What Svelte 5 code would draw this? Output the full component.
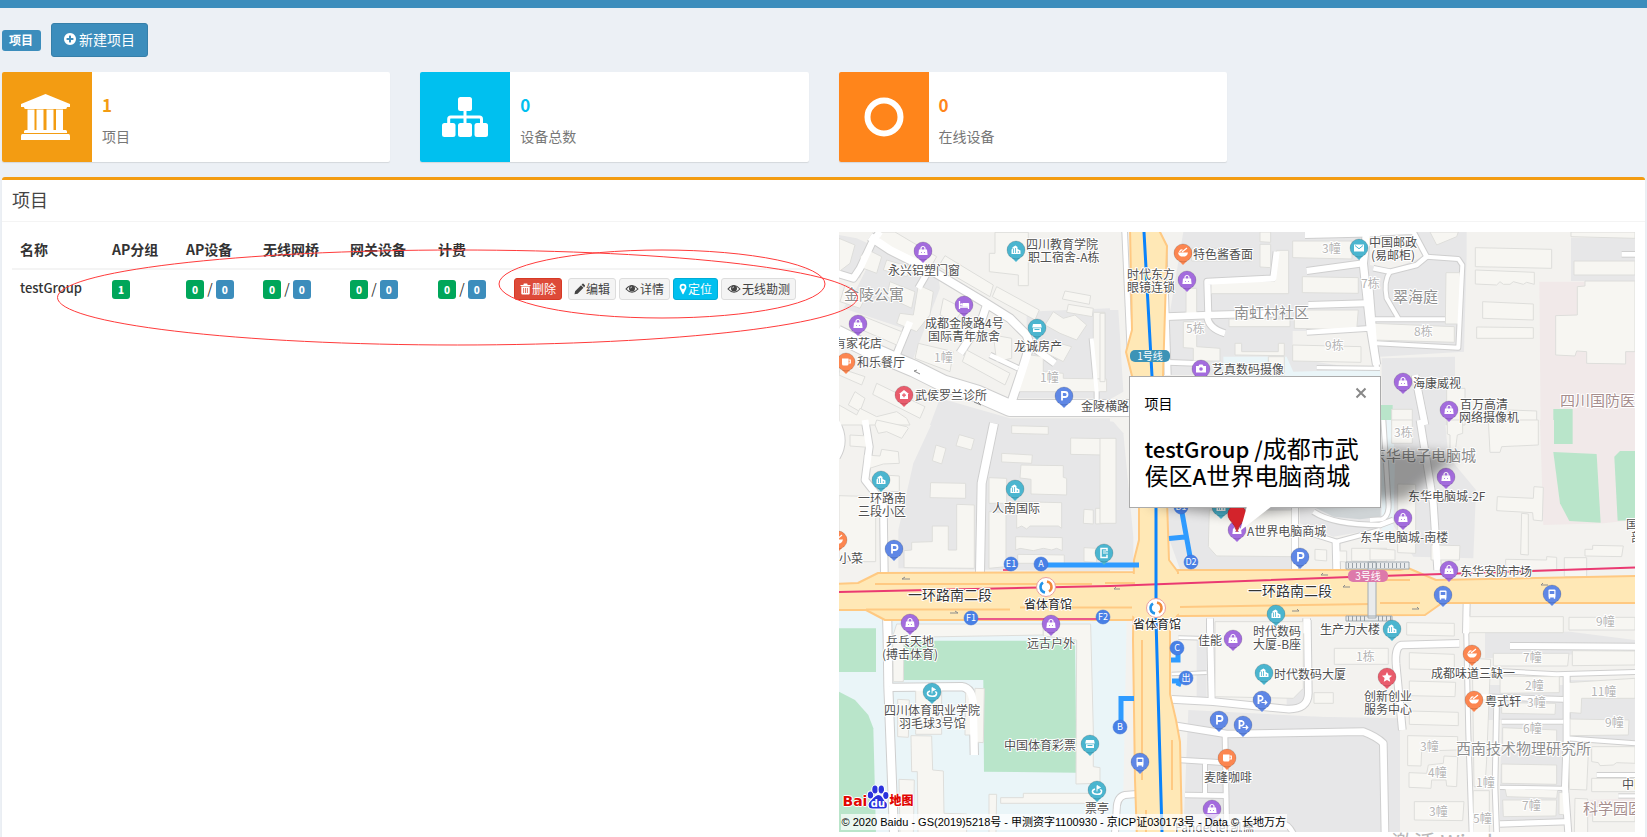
<script>
  const cards = [
    { icon: 'bank', value: 1, label: '项目', tone: 'amber' },
    { icon: 'sitemap', value: 0, label: '设备总数', tone: 'aqua' },
    { icon: 'ring', value: 0, label: '在线设备', tone: 'orange' },
  ];

  const columns = ['名称', 'AP分组', 'AP设备', '无线网桥', '网关设备', '计费', ''];
  const groups = [{ name: 'testGroup', ap: 1, counts: [[0, 0], [0, 0], [0, 0], [0, 0]] }];
  const actions = [
    { icon: 'trash', label: '删除', tone: 'danger' },
    { icon: 'pencil', label: '编辑', tone: 'plain' },
    { icon: 'eye', label: '详情', tone: 'plain' },
    { icon: 'marker', label: '定位', tone: 'info' },
    { icon: 'eye', label: '无线勘测', tone: 'plain' },
  ];

  const GREY = '#e7e7e8';
  const GREEN = '#b9e5ca';
  const PINK = '#f1e9e9';
  const WATER = '#eaf5f8';
  const LAND = '#f3f2ef';

  // Each map tile keeps its shapes in a grid of thirds of a pixel from its own origin.
  const tiles = [
    {
      x: 830, y: 225,
      areas: [
        [GREY, '27,30 80,40 125,60 90,160 27,150'],
        [GREY, '130,60 320,120 330,190 250,400 185,390 220,310 40,250 80,190 110,130'],
        [GREY, '590,260 840,250 840,520 565,520 590,400'],
        [GREY, '330,520 540,580 840,580 840,600 300,600'],
      ],
      roads: [
        [48, 'M20,325 L110,370 190,405 250,430 340,475 440,505 540,549 900,549'],
        [24, 'M120,35 L180,75 310,140 460,230 540,280 590,330 600,360 575,440 545,530'],
        [20, 'M150,20 L125,55 90,130 70,160 20,145'],
        [18, 'M300,130 L265,190'],
        [22, 'M470,240 L455,285 390,385'],
        [14, 'M480,390 L565,430'],
        [20, 'M600,360 L675,415'],
        [20, 'M240,290 L195,400'],
        [12, 'M800,540 L800,500 785,340'],
      ],
      buildings: [
        '27,40 75,60 60,115 27,140', '195,21 320,95 300,130 150,50 145,21', '90,95 115,75 155,95 140,145 100,130',
        '345,92 490,180 480,215 325,125', '170,105 240,125 230,155 160,135',
        '495,22 595,22 595,182 565,182 565,150 478,140 478,85 495,85', '500,185 628,255 615,285 487,215',
        '705,198 782,212 778,238 697,222', '715,238 790,250 787,275 710,262',
        '670,260 700,280 735,270 770,300 740,345 690,325 645,300', '790,262 825,262 825,480 790,480',
        '670,350 725,365 700,410 650,385', '265,355 370,380 360,440 255,400', '410,375 540,445 525,480 397,410',
        '180,170 255,200 245,250 170,215', '265,180 310,200 300,270 260,320 200,295 210,265 250,270',
        '340,220 400,250 375,290 330,270', '90,270 215,320 200,360 85,310', '45,180 110,210 90,250 30,230',
        '600,390 640,395 640,440 700,445 700,460 830,462 830,500 565,500 575,450',
        '140,475 285,545 270,580 128,508', '75,500 105,520 90,560 55,540',
        '27,540 80,570 90,550 140,575 200,560 230,580 240,600 27,600', '30,430 105,455 95,480 27,450',
        '490,330 545,340 545,400 500,410',
      ],
    },
    {
      x: 1100, y: 225,
      areas: [
        [GREY, '250,21 840,21 840,450 210,450 210,260'],
        [GREY, '0,255 55,255 70,500 0,540'],
        [LAND, '578,318 840,318 840,440 578,400'],
        [WATER, '370,395 560,395 580,440 840,432 840,460 370,460'],
      ],
      roads: [
        [14, 'M74,20 L90,380'],
        [18, 'M190,60 L203,450'],
        [20, 'M200,275 L330,270 520,265'],
        [18, 'M325,270 L322,170 520,160 530,80'],
        [18, 'M322,275 Q325,310 375,325'],
        [18, 'M615,30 L840,25'],
        [18, 'M620,138 L790,115'],
        [18, 'M625,240 L800,235'],
        [22, 'M800,20 L790,115 810,300 830,420'],
        [14, 'M620,322 L810,310'],
        [10, 'M650,428 L840,430'],
        [14, 'M205,412 L290,415'],
      ],
      buildings: [
        '275,70 455,70 455,108 275,108', '480,21 512,21 512,52 480,50', '480,58 512,58 512,128 480,126',
        '530,76 566,76 566,206 333,206 333,172 525,168', '578,48 756,48 756,102 578,98',
        '607,155 775,158 775,205 607,203', '258,190 290,190 290,275 258,275', '387,282 570,282 570,305 387,305',
        '583,255 775,255 770,315 583,310', '578,360 783,365 783,412 578,408',
        '405,355 425,355 425,380 535,380 535,355 553,355 553,392 405,390',
        '250,290 290,290 290,365 360,370 360,408 280,408 280,370 250,368', '505,395 553,395 553,450 505,450',
        '0,265 15,265 15,470 0,470',
      ],
    },
    {
      x: 1370, y: 225,
      areas: [
        [GREY, '0,21 290,21 290,90 282,380 30,395 0,340'],
        [LAND, '0,21 120,21 160,95 60,135 0,120'],
        [PINK, '508,170 795,170 795,600 512,600'],
        [GREY, '603,38 795,38 795,168 603,168'],
        [GREY, '35,400 255,395 255,600 160,600 35,600'],
        [GREEN, '550,552 608,552 608,600 550,600'],
        [GREEN, '30,540 68,540 68,600 30,600'],
      ],
      roads: [
        [14, 'M0,25 L130,20 170,95 140,120 60,140 10,130'],
        [12, 'M170,95 L265,102 277,120 265,368 20,355'],
        [12, 'M60,140 Q40,170 50,220 L85,280 M15,283 L225,283'],
        [14, 'M0,180 L20,430'],
        [20, 'M135,450 L165,600'],
        [14, 'M755,88 L800,88'],
      ],
      buildings: [
        '180,21 265,21 260,35 200,60', '316,68 545,73 545,130 316,125',
        '316,135 493,142 493,178 470,172 460,178 430,170 420,178 400,178 390,170 380,180 316,177',
        '338,230 490,237 490,285 338,280', '320,306 490,308 490,340 320,340', '228,143 270,143 276,200 270,297 226,297',
        '8,295 253,305 253,352 8,345', '612,108 795,108 795,150 612,150',
        '645,168 795,168 795,380 767,380 767,417 650,415 650,380 620,378 615,393 557,390 557,272 622,270 622,185 645,183',
        '230,490 285,490 285,600 230,600', '65,553 127,553 127,600 65,600', '415,555 500,558 500,600 370,600 415,580',
        '603,21 795,21 795,40 603,35',
      ],
    },
    {
      x: 830, y: 420,
      areas: [[GREY, '310,0 840,0 840,455 205,445 205,330 250,130']],
      roads: [
        [20, 'M15,0 Q50,60 20,110'],
        [20, 'M105,0 L118,80 105,180 160,250 163,460'],
        [24, 'M492,10 L455,190 450,460'],
        [20, 'M170,595 L172,640'],
      ],
      buildings: [
        '60,45 113,48 113,82 60,78', '103,105 150,108 155,88 205,95 208,130 160,132 103,150',
        '160,165 208,168 208,215 150,213', '318,75 348,85 335,132 307,122', '388,44 433,57 424,90 378,77',
        '545,17 655,20 655,43 545,40', '515,100 607,105 605,130 515,126', '302,188 407,190 407,235 300,233',
        '573,135 700,137 700,172 710,175 710,225 603,222 603,178 570,174', '477,173 530,175 530,250 477,250',
        '380,253 433,255 433,445 222,443 222,392 245,390 245,367 307,365 307,318 355,318 355,390 380,390',
        '477,275 528,277 528,440 477,445', '560,245 695,248 695,325 685,318 600,318 590,327 575,318 560,325',
        '557,350 697,353 697,392 680,385 665,390 640,385 610,392 570,385 557,390', '563,403 703,405 703,430 563,430',
        '722,54 840,56 840,310 797,312 797,265 813,265 813,105 722,103', '762,268 790,270 790,312 760,310',
        '762,383 800,385 800,427 762,425', '27,227 137,230 137,425 27,425',
        '140,0 230,20 235,25 215,55 170,35 145,40 135,15',
      ],
    },
    {
      x: 1100, y: 370,
      areas: [
        [GREY, '0,150 40,155 70,190 100,500 100,600 0,600'],
        [GREY, '205,410 575,410 575,598 240,598 205,500'],
        [GREY, '600,410 870,410 870,470 700,500 600,460'],
        ['#cfd4d6', '640,410 842,410 842,440 780,448 700,440'],
      ],
      roads: [
        [18, 'M585,410 L585,600'],
        [12, 'M600,480 L710,515 840,480'],
        [20, 'M708,515 L710,600'],
        [18, 'M330,745 L330,790'],
        [20, 'M620,745 L620,790'],
        [14, 'M640,425 Q700,465 840,465 L880,450'],
      ],
      buildings: [
        '0,205 48,205 48,460 0,460', '328,420 575,420 575,560 350,558 325,530', '645,538 680,540 680,573 645,570',
        '708,543 740,543 740,576 708,574', '755,535 860,535 860,575 755,573',
      ],
    },
    {
      x: 1370, y: 420,
      areas: [
        [PINK, '510,0 795,0 795,300 700,310 520,315'],
        [GREEN, '552,0 608,0 608,72 552,72'],
        [GREEN, '550,96 680,102 692,308 598,303 570,250'],
        [GREEN, '750,93 795,93 795,300 743,302 733,110'],
        [GREY, '35,0 225,0 235,110 318,210 310,415 130,410 60,300'],
        [WATER, '35,0 65,0 75,110 70,330 35,330'],
      ],
      roads: [
        [20, 'M150,0 L190,250 203,450'],
        [12, 'M0,300 L35,298 Q60,290 55,240 L40,0'],
        [18, 'M290,550 L288,640'],
      ],
      buildings: [
        '355,0 505,0 505,75 395,80 390,97 360,97', '232,0 278,0 278,40 262,45 255,100 240,90 240,45 232,42',
        '382,230 490,235 492,200 520,202 517,303 490,300 488,278 380,272', '455,280 475,282 475,405 452,403',
        '83,192 137,193 137,400 83,398', '183,375 270,377 268,420 183,420', '0,385 75,390 75,420 0,420',
        '407,418 530,420 530,410 560,412 560,450 407,450', '583,413 650,413 650,470 583,470',
        '668,376 760,378 755,410 645,408 645,388 668,388', '65,0 127,0 127,70 65,70',
      ],
    },
    {
      x: 830, y: 620,
      areas: [
        [WATER, '27,-40 910,-40 925,640 27,640'],
        [GREEN, '27,25 138,25 138,156 27,156'],
        [GREEN, '27,215 75,240 115,285 130,325 138,640 27,640'],
        [GREEN, '222,62 735,62 740,458 462,455 460,180 222,180'],
      ],
      roads: [
        [24, 'M172,0 L175,200 192,640'],
        [22, 'M180,202 L395,200 Q430,205 430,260 L433,405'],
      ],
      buildings: [
        '200,12 640,12 640,45 222,52 220,185 190,185 188,50',
        '640,12 782,12 790,330 790,440 810,443 810,490 738,492 740,60 640,48', '257,200 335,200 335,343 257,343',
        '203,238 238,240 235,352 203,350', '435,205 463,206 460,368 430,366', '407,218 425,220 425,345 405,345',
        '243,347 305,348 308,450 340,453 342,580 410,582 410,640 264,640 262,455 245,455',
        '207,478 253,480 250,640 210,640', '477,523 500,523 498,640 477,640', '512,533 580,533 580,520 800,520 800,550 512,550',
      ],
    },
    {
      x: 1100, y: 620,
      areas: [
        [LAND, '80,0 120,0 120,520 70,520'],
        [GREY, '265,270 840,300 840,640 250,640'],
        [GREY, '290,50 320,50 320,240 290,240'],
        [GREY, '560,230 620,180 620,260 560,260'],
        [GREY, '640,290 900,295 900,640 640,640'],
      ],
      roads: [
        [20, 'M215,238 L340,245 560,267 Q625,270 625,220 L622,0'],
        [18, 'M330,0 L335,240'],
        [8, 'M215,162 L320,158 M235,53 L320,55'],
        [20, 'M230,318 L380,342 790,335 Q830,350 850,370 L855,640'],
        [14, 'M375,342 L380,620'],
        [14, 'M240,420 L370,428'],
        [12, 'M315,430 L315,520'],
        [14, 'M255,525 L375,527'],
        [18, 'M110,522 L75,525 Q50,530 50,570 L45,640'],
        [14, 'M375,607 L540,607 Q565,610 580,640'],
      ],
      buildings: [
        '345,5 610,5 610,205 580,235 345,230', '642,218 700,218 700,250 642,250', '703,85 865,85 865,133 703,133',
      ],
    },
    {
      x: 1370, y: 620,
      areas: [
        [GREY, '345,35 600,35 795,60 795,95 345,115'],
        [GREY, '330,195 580,195 580,300 345,300'],
        [GREY, '395,315 580,315 580,500 390,500'],
        [GREY, '600,180 795,180 795,360 600,355'],
        [GREY, '390,505 580,505 580,600 390,600'],
        [PINK, '650,540 795,535 795,580 650,590'],
      ],
      roads: [
        [12, 'M288,0 L295,340 305,640'],
        [20, 'M268,70 L95,75 Q75,80 78,130 L97,330'],
        [18, 'M420,78 L800,80'],
        [12, 'M330,150 L560,163 800,156'],
        [18, 'M590,165 L590,360 585,500 595,640'],
        [14, 'M335,230 L580,238'],
        [14, 'M380,240 L375,500 380,640'],
        [12, 'M395,305 L580,305'],
        [12, 'M590,355 L800,370'],
        [10, 'M390,502 L580,505'],
        [16, 'M390,612 L600,605'],
        [12, 'M680,465 L800,465'],
        [10, 'M745,528 L800,528'],
      ],
      buildings: [
        '118,98 253,103 253,150 118,147', '118,183 257,187 255,230 118,227', '118,273 265,277 265,317 118,313',
        '113,347 263,350 263,390 155,393 153,438 113,437',
        '117,458 170,460 175,435 220,430 222,408 263,410 260,500 230,498 228,480 185,480 183,505 117,502',
        '133,545 282,545 278,602 133,600', '370,100 597,100 593,138 370,138', '607,92 795,93 795,135 607,137',
        '390,168 568,170 568,218 390,220', '590,188 795,175 795,235 635,235 633,280 590,277',
        '395,248 557,250 555,283 395,280', '600,297 777,300 775,345 600,347', '398,323 560,330 560,395 398,395',
        '395,432 560,435 560,493 395,490', '405,505 563,510 560,535 410,530', '398,540 560,540 558,588 400,590',
        '598,395 655,398 650,510 598,508', '665,380 795,380 795,430 740,428 730,435 690,437 685,428 665,425',
        '665,475 795,475 795,515 665,515', '310,512 358,512 358,640 310,640',
        '307,115 362,118 350,420 345,500 312,500', '615,535 653,537 653,640 613,640', '567,517 595,520 593,585 567,583',
        '110,8 253,10 253,48 110,45', '293,-10 580,-10 580,38 293,38', '597,-8 795,-8 795,30 597,30',
        '668,560 795,560 795,605 668,605',
      ],
    },
  ];

  const pinColors = {
    bag: '#a36cdd', bed: '#a36cdd', camera: '#a36cdd',
    tower: '#4bb5cf', store: '#4bb5cf', mail: '#4bb5cf', exit: '#4bb5cf', golf: '#4bb5cf',
    bowl: '#fc8650', cup: '#fc8650', clinic: '#e95c6c', star: '#e95c6c',
    park: '#5f87e5', parkTo: '#5f87e5', bus: '#5f87e5',
  };

  const pins = [
    ['bag', 923, 251], ['bag', 858, 324], ['bag', 1187, 280], ['bag', 1403, 382], ['bag', 1449, 410],
    ['bag', 1446, 477], ['bag', 1403, 518], ['bag', 1449, 570], ['bag', 910, 623], ['bag', 1051, 624],
    ['bag', 1233, 639], ['bag', 1212, 809], ['bag', 1237, 530], ['bed', 964, 305], ['camera', 1201, 369],
    ['tower', 1016, 250], ['tower', 881, 480], ['tower', 1015, 489], ['tower', 1276, 614], ['tower', 1264, 673],
    ['tower', 1392, 629], ['tower', 1221, 507], ['store', 1037, 328], ['store', 1090, 744], ['mail', 1359, 248],
    ['exit', 1104, 553], ['golf', 932, 692], ['golf', 1097, 790], ['bowl', 1183, 253], ['bowl', 1472, 654],
    ['bowl', 1474, 700], ['bowl', 838, 540], ['cup', 846, 362], ['cup', 1227, 758], ['clinic', 904, 395],
    ['star', 1387, 677], ['park', 1064, 396], ['park', 894, 549], ['park', 1300, 557], ['park', 1219, 720],
    ['parkTo', 1262, 700], ['parkTo', 1243, 725], ['bus', 1443, 595], ['bus', 1552, 594], ['bus', 1140, 762],
  ];

  const exits = [
    ['E1', 1011, 564], ['A', 1041, 564], ['F1', 971, 618], ['F2', 1103, 617], ['D2', 1191, 562],
    ['D1', 1181, 507], ['C', 1177, 648], ['出', 1186, 678], ['B', 1120, 727],
  ];

  const stations = [[1046, 587], [1156, 608]];

  const labels = [
    ['四川教育学院', 1026, 245], ['职工宿舍-A栋', 1028, 258], ['永兴铝塑门窗', 888, 271], ['成都金陵路4号', 925, 324],
    ['国际青年旅舍', 928, 337], ['龙诚房产', 1014, 347], ['有家花店', 834, 344], ['和乐餐厅', 857, 363],
    ['武侯罗兰诊所', 915, 396], ['金陵横路', 1081, 407], ['特色酱香面', 1193, 255], ['时代东方', 1127, 275],
    ['眼镜连锁', 1127, 288], ['艺真数码摄像', 1212, 370], ['中国邮政', 1369, 243], ['(易邮柜)', 1371, 256],
    ['海康威视', 1413, 384], ['百万高清', 1460, 405], ['网络摄像机', 1459, 418], ['一环路南', 858, 499],
    ['三段小区', 858, 512], ['人南国际', 992, 509], ['小菜', 839, 559], ['A世界电脑商城', 1247, 532],
    ['东华电脑城-2F', 1408, 497], ['东华电脑城-南楼', 1360, 538], ['东华安防市场', 1460, 572], ['国', 1626, 525],
    ['部', 1631, 538], ['乒乓天地', 886, 642], ['(搏击体育)', 882, 655], ['远古户外', 1027, 644],
    ['四川体育职业学院', 884, 711], ['羽毛球3号馆', 899, 724], ['中国体育彩票', 1004, 746], ['票亭', 1085, 809],
    ['佳能', 1198, 641], ['时代数码', 1253, 632], ['大厦-B座', 1253, 645], ['时代数码大厦', 1274, 675],
    ['生产力大楼', 1320, 630], ['创新创业', 1364, 697], ['服务中心', 1364, 710], ['麦隆咖啡', 1204, 778],
    ['Fandecler凯儒', 1175, 828], ['成都味道三缺一', 1431, 674], ['粤式轩', 1485, 702], ['中国', 1622, 785],
    ['省体育馆', 1024, 605, 'dark'], ['省体育馆', 1133, 625, 'dark'],
    ['一环路南二段', 908, 596, 'road'], ['一环路南二段', 1248, 592, 'road'],
    ['金陵公寓', 844, 294, 'area'], ['南虹村社区', 1234, 312, 'area'], ['翠海庭', 1393, 296, 'area'],
    ['东华电子电脑城', 1371, 455, 'area'], ['西南技术物理研究所', 1456, 748, 'area'],
    ['四川国防医院', 1560, 400, 'school'], ['科学园医院', 1583, 808, 'school'],
    ['1幢', 934, 358, 'unit'], ['1幢', 1040, 378, 'unit'], ['3幢', 1322, 249, 'unit'], ['7栋', 1361, 284, 'unit'],
    ['5栋', 1186, 329, 'unit'], ['9栋', 1325, 346, 'unit'], ['8栋', 1414, 332, 'unit'], ['3栋', 1394, 433, 'unit'],
    ['9幢', 1596, 622, 'unit'], ['1栋', 1356, 657, 'unit'], ['7幢', 1523, 658, 'unit'], ['2幢', 1525, 686, 'unit'],
    ['3幢', 1527, 703, 'unit'], ['11幢', 1591, 692, 'unit'], ['6幢', 1523, 729, 'unit'], ['9幢', 1605, 723, 'unit'],
    ['3幢', 1420, 747, 'unit'], ['4幢', 1428, 773, 'unit'], ['3幢', 1429, 812, 'unit'], ['1幢', 1476, 783, 'unit'],
    ['7幢', 1522, 806, 'unit'], ['5幢', 1473, 819, 'unit'],
  ];

  let popupOpen = $state(true);
</script>

{#snippet glyph(kind)}
  {#if kind === 'bag'}
    <path d="M-4-1.5h8l.6 5.5h-9.2z" fill="#fff" />
    <path d="M-2-1v-1.500a2 2 0 0 1 4 0V-1" fill="none" stroke="#fff" stroke-width="1.2" />
    <path d="M-1.500 1v.8M1.500 1v.8" stroke="#a36cdd" />
  {:else if kind === 'bed'}
    <path d="M-4.500-4v8M-4.500 2h9v2M4.500 2V-1H-1v2" fill="none" stroke="#fff" stroke-width="1.300" />
    <path d="M-1-2h5.500v3.500H-1z" fill="#fff" /><circle cx="-2.600" cy="-.6" r="1.200" fill="#fff" />
  {:else if kind === 'camera'}
    <path d="M-5-3h2.500l1-1.500h3L2.500-3H5v6.500H-5z" fill="#fff" /><circle r="1.800" fill="#a36cdd" />
  {:else if kind === 'tower'}
    <path d="M-4.500-.5l1-.8v-1.500L-.5-4.500 1.500-3v2L4.500.5V4h-9z" fill="#fff" />
    <path d="M-2.500-1.500v4.500M-.5-2v5M2.300 1v2" stroke="#4bb5cf" stroke-width=".8" />
  {:else if kind === 'store'}
    <path d="M-4-4h8l.8 3.500h-9.600zM-4 .3h8V4h-8z" fill="#fff" /><path d="M-2.500 1.500h5" stroke="#4bb5cf" />
  {:else if kind === 'mail'}
    <path d="M-5-3.500H5v7H-5z" fill="#fff" /><path d="M-4-2.500L0 .8l4-3.300" fill="none" stroke="#4bb5cf" />
  {:else if kind === 'exit'}
    <path d="M3-1.800V-4.500h-6v9h6V1.800" fill="none" stroke="#fff" stroke-width="1.500" />
    <path d="M-1 0h5M-1-2h3" stroke="#fff" stroke-width="1.200" />
  {:else if kind === 'golf'}
    <path d="M0 1.500v-6L3.500-2.500 0-1" fill="#fff" stroke="#fff" stroke-width=".9" />
    <path d="M-2-1q-3 1-2.500 3T0 4.300 4.500 2 3 0" fill="none" stroke="#fff" stroke-width="1.500" />
  {:else if kind === 'bowl'}
    <path d="M-5-.5H5Q4.500 2.500 2 3.500H-2Q-4.500 2.500-5-.5z" fill="#fff" />
    <path d="M-1-1l5-4M-3.500-1q1-2.500 3-2" fill="none" stroke="#fff" stroke-width="1.200" />
  {:else if kind === 'cup'}
    <path d="M-4-3.500H2.500V2Q2.500 3.500 1 3.500h-3.500Q-4 3.500-4 2z" fill="#fff" />
    <path d="M2.500-2H4.300V1H2.500" fill="none" stroke="#fff" stroke-width="1.200" />
  {:else if kind === 'clinic'}
    <path d="M0-5L5-1H4v5h-8V-1h-1z" fill="#fff" /><path d="M0-1.800v4M-2 .2h4" stroke="#e95c6c" stroke-width="1.300" />
  {:else if kind === 'star'}
    <path d="M0-5l1.500 3.300 3.600.4-2.700 2.400.8 3.600L0 2.900l-3.200 1.800.8-3.600-2.700-2.400 3.600-.4z" fill="#fff" />
  {:else if kind === 'bus'}
    <rect x="-3.500" y="-4.500" width="7" height="8" rx="1" fill="#fff" /><path d="M-2.300-3h4.600v3h-4.600z" fill="#5f87e5" />
    <path d="M-2.500 3v1.800M2.500 3v1.800" stroke="#fff" stroke-width="1.400" />
  {:else}
    <path d={kind === 'park' ? 'M-2 4.500v-8.500H1a2.500 2.500 0 0 1 0 5h-3' : 'M-3.500 4v-8H-1a2.400 2.400 0 0 1 0 4.600h-2.500'} fill="none" stroke="#fff" stroke-width="1.800" />
    {#if kind === 'parkTo'}<path d="M-.5 2.500h5M2.800.5l2 2-2 2" fill="none" stroke="#fff" stroke-width="1.200" />{/if}
  {/if}
{/snippet}

{#snippet actionIcon(kind)}
  {#if kind === 'trash'}
    <svg class="ico" width="11" height="12" viewBox="0 0 11 12" aria-hidden="true">
      <path d="M3.500 2V1q0-.6.600-.6h2.800q.6 0 .6.600v1H10.500v1H.5V2zM1.300 3.500h8.400v7q0 1.100-1 1.100H2.300q-1 0-1-1.100z" fill="currentColor" />
      <path d="M3.600 5v5M5.500 5v5M7.400 5v5" stroke="#dd4b39" stroke-width=".8" />
    </svg>
  {:else if kind === 'pencil'}
    <svg class="ico" width="11" height="12" viewBox="0 0 11 12" aria-hidden="true">
      <path d="M.5 11.300l.6-3.100L7 2.300l2.500 2.500-5.900 5.900zM7.600 1.700l.9-.9q.5-.4 1 0l1.400 1.500q.4.500 0 1l-.8.900z" fill="currentColor" />
    </svg>
  {:else if kind === 'eye'}
    <svg class="ico" width="14" height="12" viewBox="0 0 14 12" aria-hidden="true">
      <path d="M1 6Q7-1 13 6 7 12.500 1 6z" fill="none" stroke="currentColor" stroke-width="1.100" />
      <circle cx="7" cy="5.500" r="3" fill="currentColor" /><path d="M5.600 5.300A1.400 1.400 0 0 1 7 3.900" stroke="#f4f4f4" stroke-width=".7" fill="none" />
    </svg>
  {:else}
    <svg class="ico" width="8" height="12" viewBox="0 0 8 12" aria-hidden="true">
      <path fill-rule="evenodd" d="M4 .8a3.400 3.400 0 0 1 3.400 3.400c0 1-.3 1.500-.7 2.300L4.500 11q-.5.700-1 0L1.300 6.500C.9 5.700.6 5.200.6 4.200A3.400 3.400 0 0 1 4 .8zm0 1.800a1.700 1.700 0 1 0 0 3.400 1.700 1.700 0 0 0 0-3.400z" fill="currentColor" />
    </svg>
  {/if}
{/snippet}

<div class="page">
  <div class="topbar"></div>
  <main>
    <header class="tools">
      <span class="tag">项目</span>
      <button class="create" type="button">
        <svg width="12" height="12" viewBox="0 0 1536 1536" aria-hidden="true">
          <path fill="currentColor" d="M1216 832v-128q0-26-19-45t-45-19h-256v-256q0-26-19-45t-45-19h-128q-26 0-45 19t-19 45v256h-256q-26 0-45 19t-19 45v128q0 26 19 45t45 19h256v256q0 26 19 45t45 19h128q26 0 45-19t19-45v-256h256q26 0 45-19t19-45zm320-64q0 209-103 385.500t-279.500 279.500-385.500 103-385.500-103-279.500-279.500-103-385.500 103-385.500 279.500-279.500 385.500-103 385.500 103 279.500 279.500 103 385.500z" />
        </svg>
        新建项目
      </button>
    </header>

    <section class="cards">
      {#each cards as card}
        <article class="card {card.tone}">
          <div class="card-icon">
            {#if card.icon === 'bank'}
              <svg width="49" height="46" viewBox="0 0 49 46" fill="#fff" aria-hidden="true">
                <path d="M24.500 0L49 10v3h-3q0 2-1.500 2H4.500Q3 15 3 13H0v-3zM6.500 15.500h7V36h-7zM15.500 15.500h7V36h-7zM25.500 15.500h7V36h-7zM35 15.500h7V36h-7zM3 39v-1.500Q3 36 4.500 36h40q1.500 0 1.500 1.500V39zM0 46v-4q0-2 1.500-2h46q1.500 0 1.500 2v4z" />
              </svg>
            {:else if card.icon === 'sitemap'}
              <svg width="46" height="40" viewBox="0 0 46 40" fill="#fff" aria-hidden="true">
                <rect x="16" width="14" height="14" rx="2.500" /><rect y="26" width="13.500" height="14" rx="2.500" />
                <rect x="16" y="26" width="14" height="14" rx="2.500" /><rect x="32.500" y="26" width="13.500" height="14" rx="2.500" />
                <path d="M23 13v14M6.700 27v-5q0-2 2-2h28.800q2 0 2 2v5" fill="none" stroke="#fff" stroke-width="3" />
              </svg>
            {:else}
              <svg width="40" height="40" viewBox="0 0 40 40" aria-hidden="true">
                <circle cx="20" cy="20" r="16.500" fill="none" stroke="#fff" stroke-width="6" />
              </svg>
            {/if}
          </div>
          <div class="card-text">
            <strong>{card.value}</strong>
            <span>{card.label}</span>
          </div>
        </article>
      {/each}
    </section>

    <section class="box">
      <h3>项目</h3>
      <div class="box-body">
        <div class="list">
          <table>
            <colgroup>
              <col class="c-name" /><col class="c-group" /><col class="c-ap" /><col class="c-wide" /><col class="c-gate" /><col class="c-fee" /><col />
            </colgroup>
            <thead>
              <tr>{#each columns as c}<th scope="col">{c}</th>{/each}</tr>
            </thead>
            <tbody>
              {#each groups as g}
                <tr>
                  <td class="name">{g.name}</td>
                  <td><span class="badge green">{g.ap}</span></td>
                  {#each g.counts as [on, all]}
                    <td><span class="badge green">{on}</span> / <span class="badge blue">{all}</span></td>
                  {/each}
                  <td>
                    <div class="actions">
                      {#each actions as a}
                        <button type="button" class="act {a.tone}">{@render actionIcon(a.icon)}{a.label}</button>
                      {/each}
                    </div>
                  </td>
                </tr>
              {/each}
            </tbody>
          </table>
        </div>

        <div class="map">
          <svg class="canvas" aria-label="地图">
            <defs>
              <filter id="soft" x="-20%" y="-50%" width="140%" height="200%"><feGaussianBlur stdDeviation="6" /></filter>
            </defs>
            <g transform="translate(-839 -232)">
              {#each tiles as t}
                <g transform="translate({t.x} {t.y}) scale(0.3333)">
                  {#each t.areas as [fill, points]}<polygon {points} {fill} />{/each}
                </g>
              {/each}
              {#each tiles as t}
                <g transform="translate({t.x} {t.y}) scale(0.3333)" fill="none" stroke="#cfcfcf" stroke-linejoin="round">
                  {#each t.roads as [w, d]}<path {d} stroke-width={w + 6} />{/each}
                </g>
              {/each}
              {#each tiles as t}
                <g transform="translate({t.x} {t.y}) scale(0.3333)" fill="#f7f6f2" stroke="#dededb" stroke-width="3">
                  {#each t.buildings as points}<polygon {points} />{/each}
                </g>
              {/each}
              {#each tiles as t}
                <g transform="translate({t.x} {t.y}) scale(0.3333)" fill="none" stroke="#fff" stroke-linejoin="round">
                  {#each t.roads as [w, d]}<path {d} stroke-width={w} />{/each}
                </g>
              {/each}

              <!-- trunk roads -->
              <g fill="#ffe8b6" stroke="#ffc982" stroke-width="2" stroke-linejoin="round">
                <path d="M836 584L858 583 878 573 1137 572V570L1400 570 1408 568 1436 580 1640 576V603L1442 603 1425 615 1180 616 1130 620 885 620 866 610 836 610z" />
                <path d="M1130 228H1158L1167 246 1163 376 1167 500 1169 560 1178 572V614L1170 630V694L1176 720 1180 742 1182 832V840H1137L1135 780 1133 640 1134 560 1139 540V507L1132 376 1126 352 1132 330z" />
              </g>
              <path d="M1130 574h52v38l-12 6h-34l-6-4z" fill="#ffe8b6" />
              <g fill="none" stroke="#ffc982" stroke-width="2">
                <path d="M875 584H1092M1105 583H1135M866 609.500H1010M1020 607.500H1132M1180 607L1240 606 1372 604M1380 603H1420M1378 580H1410M1142 640V780M1146 810V832M1172 740V790" />
              </g>
              <path d="M1368 562h8v56h-8zM1346 562h63v7h-63zM1346 616h46v5h-46z" fill="#e9ebec" stroke="#a3acb2" stroke-width="1" />
              <path d="M1348 565.500h60M1348 618.500h18M1378 618.500h14" stroke="#98a1a8" stroke-width="5" stroke-dasharray="1 3" />

              <!-- metro lines -->
              <path d="M839 592L1110 586 1350 577 1635 567.500" fill="none" stroke="#ea3a72" stroke-width="2" />
              <path d="M977 619H1097M1003 570h8" fill="none" stroke="#ea5a8a" stroke-width="2" />
              <path d="M1144 232L1152 376 1156 507 1156 620 1162 832" fill="none" stroke="#0b83fb" stroke-width="3" />
              <path d="M1041 565H1139M1181 507L1191 562M1169 538.500L1185 537M1134 698.500H1121V727M1171 660H1178V648M1172 681H1180L1178 686" fill="none" stroke="#2f9bff" stroke-width="5" />
              <rect x="1130" y="350" width="40" height="12" rx="5" fill="#3d93b6" />
              <rect x="1348" y="570" width="40" height="12" rx="5" fill="#dd79aa" />
              <text class="line" x="1150" y="360">1号线</text>
              <text class="line" x="1368" y="580">3号线</text>
              <g fill="none" stroke="#8c8c8c" stroke-width="1">
                <path d="M910 579h-8l3-2M950 613h8l-3-2M1120 589h-6l2-2M1328 575h-7l2-2M1350 587h-7l2-2M1292 611h7l-2-2M1412 609h7l-2-2M1548 585h-7l2-2M920 374l-6-3 3-1M974 402l7 3-3-3" />
              </g>

              {#each stations as [x, y]}
                <g transform="translate({x} {y})" fill="none">
                  <circle r="9.500" fill="#fff" stroke="#e9a0a0" />
                  <path d="M-1 5.500A5.500 5.500 0 0 1-3-4.500" stroke="#2494e8" stroke-width="2.500" />
                  <path d="M1-5.500A5.500 5.500 0 0 1 3 4.500" stroke="#f18a3c" stroke-width="2.500" />
                </g>
              {/each}
              {#each exits as [name, x, y]}
                <circle cx={x} cy={y} r="7" fill="#4880e6" stroke="#3d6fd0" stroke-width=".5" />
                <text class="exit" {x} y={y + 3}>{name}</text>
              {/each}
              {#each labels as [text, x, y, kind]}
                <text class="poi {kind ?? ''}" {x} y={y + (kind === 'area' || kind === 'school' ? 6 : 4)}>{text}</text>
              {/each}
              {#each pins as [kind, x, y]}
                <g transform="translate({x} {y})">
                  <path d="M-4 8L0 12 4 8z" fill={pinColors[kind]} />
                  <circle r="9" fill={pinColors[kind]} stroke="#00000026" />
                  {@render glyph(kind)}
                </g>
              {/each}

              {#if popupOpen}
                <path d="M1145 505L1240 516 1380 500 1405 500 1458 455 1380 448z" fill="#000" opacity=".36" filter="url(#soft)" />
              {/if}
              <path d="M1237 532Q1235 525 1230 520A9 9 0 1 1 1244 520Q1239 525 1237 532z" fill="#d3232b" stroke="#a8151c" stroke-width=".7" />
            </g>
          </svg>

          {#if popupOpen}
            <div class="popup" role="dialog" aria-label="项目">
              <button class="close" type="button" aria-label="关闭" onclick={() => (popupOpen = false)}>
                <svg width="12" height="12" viewBox="0 0 12 12" aria-hidden="true"><path d="M1.500 1.500l9 9M10.500 1.500l-9 9" stroke="#888" stroke-width="2" /></svg>
              </button>
              <p class="popup-title">项目</p>
              <p class="popup-text"><span>testGroup / </span>成都市武侯区<span>A</span>世界电脑商城</p>
              <svg class="tail" width="34" height="26" viewBox="0 0 34 26" aria-hidden="true"><path d="M8 0L1 25 33 0z" fill="#fff" /></svg>
            </div>
          {/if}

          <div class="brand">
            <span>Bai</span>
            <svg width="22" height="26" viewBox="0 0 22 26" aria-hidden="true">
              <g fill="#2a32dd" stroke="#fff" stroke-width="2" paint-order="stroke">
                <ellipse cx="3.500" cy="11" rx="2.700" ry="3.600" /><ellipse cx="8" cy="5.500" rx="2.700" ry="3.900" />
                <ellipse cx="14.300" cy="5.500" rx="2.700" ry="3.900" /><ellipse cx="18.800" cy="11.500" rx="2.600" ry="3.400" />
                <path d="M11 11q3 0 4.500 3t4 5q2 6-4 5.500H7Q0 25 2 19q2-2.500 4.500-5T11 11z" />
              </g>
              <text x="11" y="23">du</text>
            </svg>
            <span class="ditu">地图</span>
          </div>
          <small class="copyright">© 2020 Baidu - GS(2019)5218号 - 甲测资字1100930 - 京ICP证030173号 - Data © 长地万方</small>
        </div>
      </div>
    </section>
  </main>

  <svg class="marks" width="870" height="360" viewBox="0 0 870 360" aria-hidden="true">
    <g fill="none" stroke="#ff3b3b" stroke-width="1">
      <ellipse cx="457.500" cy="297.500" rx="400" ry="47.500" />
      <ellipse cx="662" cy="284" rx="163" ry="34" />
    </g>
  </svg>
  <div class="activate">激活 Windows</div>
</div>

<style>
  :global(body) { margin: 0; }
  .page {
    position: relative;
    height: 100vh;
    overflow: hidden;
    background: #ecf0f5;
    color: #333;
    font: 14px/20px "Noto Sans CJK SC", "Open Sans", sans-serif;
  }
  .page * { box-sizing: border-box; }
  button { font: inherit; cursor: pointer; }
  .topbar { height: 8px; background: #3c8dbc; }
  main { padding: 15px 2px 0; }

  .tools { display: flex; align-items: center; gap: 10px; margin-bottom: 15px; }
  .tag {
    padding: 0 8px 2px 7px;
    border-radius: 3px;
    background: #3c8dbc;
    color: #fff;
    font-size: 12px;
    font-weight: 700;
    line-height: 19px;
  }
  .create {
    display: flex;
    align-items: center;
    gap: 3px;
    height: 34px;
    padding: 0 12px 2px;
    border: 1px solid #367fa9;
    border-radius: 3px;
    background: #3c8dbc;
    color: #fff;
  }

  .cards { display: grid; grid-template-columns: repeat(4, 1fr); gap: 30px; margin-bottom: 15px; }
  .card {
    display: flex;
    height: 90px;
    overflow: hidden;
    border-radius: 2px;
    background: #fff;
    box-shadow: 0 1px 1px rgba(0, 0, 0, 0.1);
  }
  .card-icon { display: flex; align-items: center; justify-content: center; width: 90px; padding-right: 4px; background: var(--tone); }
  .card-text { display: flex; flex-direction: column; gap: 8px; padding: 20px 10px 0; }
  .card-text strong { color: var(--tone); font-size: 17px; line-height: 26px; }
  .card-text span { color: #777; }
  .amber { --tone: #f39c12; }
  .aqua { --tone: #00c0ef; }
  .aqua .card-icon, .orange .card-icon { padding-right: 0; }
  .orange { --tone: #ff851b; }

  .box { border-top: 3px solid #f39c12; border-radius: 3px; background: #fff; box-shadow: 0 1px 1px rgba(0, 0, 0, 0.1); }
  h3 { margin: 0; padding: 9px 10px 11px; border-bottom: 1px solid #f4f4f4; color: #444; font-size: 18px; font-weight: 400; line-height: 21px; }
  .box-body { display: grid; grid-template-columns: 1fr 1fr; gap: 30px; padding: 10px; }
  .list { min-width: 0; }

  table { width: 100%; border-collapse: collapse; table-layout: fixed; }
  .c-name { width: 92px; }
  .c-group { width: 74px; }
  .c-ap { width: 77px; }
  .c-wide { width: 87px; }
  .c-gate { width: 88px; }
  .c-fee { width: 76px; }
  th { padding: 7px 8px 9px; border-bottom: 2px solid #f4f4f4; font-weight: 700; text-align: left; white-space: nowrap; }
  td { padding: 8px; vertical-align: top; white-space: nowrap; }
  .name { font-size: 13px; font-weight: 500; }
  .badge {
    display: inline-block;
    padding: 0 6px;
    border-radius: 3px;
    color: #fff;
    font-size: 10px;
    font-weight: 900;
    line-height: 19px;
  }
  .green { background: #00a65a; }
  .blue { background: #3c8dbc; }
  .actions { display: flex; gap: 3px; }
  .act {
    display: flex;
    align-items: center;
    gap: 1px;
    height: 22px;
    padding: 0 5px;
    border: 1px solid #ddd;
    border-radius: 3px;
    background: #f4f4f4;
    color: #444;
    font-size: 12px;
    line-height: 18px;
  }
  .act .ico { flex: none; }
  .danger { margin-right: 3px; border-color: #d73925; background: #dd4b39; color: #fff; }
  .info { border-color: #00acd6; background: #00c0ef; color: #fff; }

  .map { position: relative; height: 600px; background: #f3f2ef; }
  .canvas { display: block; width: 100%; height: 100%; overflow: hidden; }
  .poi { fill: #505050; font-size: 12px; stroke: #fff; stroke-width: 2px; stroke-linejoin: round; paint-order: stroke; }
  .dark { fill: #222; }
  .road { fill: #333; font-size: 14px; }
  .area { fill: #8e8e8e; font-size: 15px; }
  .school { fill: #a68e8e; font-size: 15px; }
  .unit { fill: #b5b5b5; }
  .line { fill: #fff; font-size: 10px; text-anchor: middle; }
  .exit { fill: #fff; font-size: 9px; text-anchor: middle; }

  .popup {
    position: absolute;
    top: 144px;
    left: 290px;
    width: 252px;
    height: 132px;
    padding: 15px;
    border: 1px solid #ababab;
    background: #fff;
    color: #000;
  }
  .popup-title { margin: 0; line-height: 22px; }
  .popup-text { margin: 20px 0 0; font-size: 24px; line-height: 27px; }
  .popup-text span { font-size: 22px; font-weight: 500; line-height: 20px; }
  .close { position: absolute; top: 9px; right: 12px; width: 14px; height: 14px; padding: 1px; border: 0; background: none; line-height: 0; }
  .tail { position: absolute; top: 129px; left: 109px; }

  .brand { position: absolute; bottom: 22px; left: 4px; display: flex; align-items: flex-end; color: #e10602; font: 700 14px/18px "DejaVu Sans", "Noto Sans CJK SC", sans-serif; text-shadow: 1px 0 #fff, -1px 0 #fff, 0 1px #fff, 0 -1px #fff; }
  .brand text { fill: #fff; font-size: 10px; font-weight: 700; text-anchor: middle; text-shadow: none; }
  .brand .ditu { font-size: 12px; font-weight: 900; }
  .copyright {
    position: absolute;
    bottom: 2px;
    left: 2px;
    padding: 0 1px;
    background: rgba(255, 255, 255, 0.7);
    color: #000;
    font: 11px/16px "Liberation Sans", "Noto Sans CJK SC", sans-serif;
    white-space: nowrap;
  }

  .marks { position: absolute; top: 0; left: 0; pointer-events: none; }
  .activate { position: absolute; right: 113px; bottom: -20px; color: #b8b8b8; font-size: 22px; line-height: 32px; pointer-events: none; }
</style>
